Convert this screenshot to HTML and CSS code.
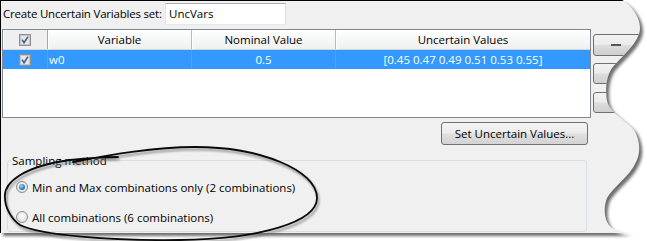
FILE: index.html
```html
<!DOCTYPE html>
<html>
<head>
<meta charset="utf-8">
<link rel="stylesheet" href="styles.css">
</head>
<body>
<div class="frame">
  <div class="panel">
    <div class="top">
      <div class="top-inner">
        <span class="lbl">Create Uncertain Variables set:</span>
        <div class="name">UncVars</div>
      </div>
    </div>
    <div class="mid">
      <div class="table">
        <div class="row head">
          <div class="cell c1"><svg class="cb" width="12" height="12" viewBox="0 0 12 12"><rect x="0.5" y="0.5" width="11" height="11" fill="#f3f3f3" stroke="#8e8f8f"/><rect x="1.5" y="1.5" width="9" height="9" fill="#e4e6e8" stroke="#c3c6ca"/><path d="M3,5.6 L5,8.6 L9,2.6" stroke="#4d5f8f" stroke-width="1.7" fill="none"/></svg></div>
          <div class="cell c2">Variable</div>
          <div class="cell c3">Nominal Value</div>
          <div class="cell c4">Uncertain Values</div>
        </div>
        <div class="row sel">
          <div class="cell c1"><svg class="cb" width="12" height="12" viewBox="0 0 12 12"><rect x="0.5" y="0.5" width="11" height="11" fill="#f3f3f3" stroke="#8e8f8f"/><rect x="1.5" y="1.5" width="9" height="9" fill="#e4e6e8" stroke="#c3c6ca"/><path d="M3,5.6 L5,8.6 L9,2.6" stroke="#4d5f8f" stroke-width="1.7" fill="none"/></svg></div>
          <div class="cell c2 left">w0</div>
          <div class="cell c3">0.5</div>
          <div class="cell c4">[0.45 0.47 0.49 0.51 0.53 0.55]</div>
        </div>
      </div>
      <div class="side">
        <div class="btn b1"><span class="dash"></span></div>
        <div class="btn b2"><span class="ico2"></span></div>
        <div class="btn b3"><span class="ico3"></span></div>
      </div>
    </div>
    <div class="actions">
      <div class="btn wide">Set Uncertain Values...</div>
    </div>
    <div class="group">
      <span class="legend">Sampling method</span>
      <div class="opts">
        <div class="opt"><span class="radio on"></span><span>Min and Max combinations only (2 combinations)</span></div>
        <div class="opt"><span class="radio"></span><span>All combinations (6 combinations)</span></div>
      </div>
    </div>
  </div>

  <svg class="overlay" width="647" height="241" viewBox="0 0 647 241">
    <defs>
      <clipPath id="outside">
        <path clip-rule="evenodd" d="M0,0H647V241H0Z M0,0 H622 C630,4 640,16 640,28 C640,42 622,56 612,68 C605,78 605,96 608,104 C612,114 628,122 634,130 C640,140 641,152 636,162 C630,176 612,188 607,198 C603,208 604,222 612,228 C618,232 626,233 632,233 H0 Z"/>
      </clipPath>
      <filter id="soft" x="-5%" y="-5%" width="110%" height="115%">
        <feGaussianBlur stdDeviation="1.6"/>
      </filter>
      <filter id="soft2" x="-5%" y="-20%" width="110%" height="140%">
        <feGaussianBlur stdDeviation="1.1"/>
      </filter>
    </defs>
    <path fill="#ffffff" fill-rule="evenodd" d="M0,0H647V241H0Z M0,0 H622 C630,4 640,16 640,28 C640,42 622,56 612,68 C605,78 605,96 608,104 C612,114 628,122 634,130 C640,140 641,152 636,162 C630,176 612,188 607,198 C603,208 604,222 612,228 C618,232 626,233 632,233 H0 Z"/>
    <g clip-path="url(#outside)">
      <path fill="#555555" opacity="0.85" filter="url(#soft)" transform="translate(3,3)" d="M0,0 H622 C630,4 640,16 640,28 C640,42 622,56 612,68 C605,78 605,96 608,104 C612,114 628,122 634,130 C640,140 641,152 636,162 C630,176 612,188 607,198 C603,208 604,222 612,228 C618,232 626,233 632,233 H0 Z"/>
    </g>
    <path class="ell-shadow" filter="url(#soft2)" transform="translate(1.5,2.5)" d="M73,162 C100,157 150,147 195,147 C260,147 317,170 317,198 C317,222 260,239 180,240 C110,241 40,235 20,225 C10,218 5,206 5,198 C3,182 25,166 70,160 C90,158 105,157 118,157"/>
    <path class="ell" d="M73,162 C100,157 150,147 195,147 C260,147 317,170 317,198 C317,222 260,239 180,240 C110,241 40,235 20,225 C10,218 5,206 5,198 C3,182 25,166 70,160 C90,158 105,157 118,157"/>
  </svg>
</div>
</body>
</html>
```

FILE: styles.css
```css
* { box-sizing: border-box; }
body {
  margin: 0;
  background: #ffffff;
  font-family: "Open Sans", "Noto Sans", "DejaVu Sans", sans-serif;
  font-size: 11.5px;
  color: #000;
}
.frame {
  position: relative;
  width: 647px;
  height: 241px;
  overflow: hidden;
}
.panel {
  width: 647px;
  height: 233px;
  background: #f0f0f0;
  border-left: 1px solid #000;
  border-top: 1px solid #000;
}
.top {
  height: 28px;
  padding: 2px 0 0 2px;
}
.top-inner {
  display: grid;
  grid-template-columns: 162px 121px;
  align-items: center;
  height: 22px;
}
.lbl {
  white-space: nowrap;
  line-height: 22px;
  letter-spacing: -0.2px;
}
.name {
  height: 22px;
  background: #fff;
  border: 1px solid #abadb3;
  border-color: #abadb3 #dbdfe6 #e3e9ef #e2e3ea;
  padding-left: 3px;
  line-height: 20px;
}
.mid {
  display: flex;
  margin-left: 1px;
  gap: 2px;
  height: 89px;
}
.table {
  width: 589px;
  height: 89px;
  border: 1px solid #828790;
  background: #fff;
  flex: none;
}
.row {
  display: grid;
  grid-template-columns: 45px 144px 144px 1fr;
}
.head {
  height: 20px;
  background: linear-gradient(#ffffff 0%, #f7f8f9 45%, #f0f0f0 100%);
  border-bottom: 1px solid #d5d5d5;
}
.cell {
  display: flex;
  align-items: center;
  justify-content: center;
  white-space: nowrap;
  border-right: 1px solid #b9b9b9;
  overflow: hidden;
}
.head .cell { box-shadow: inset 1px 0 #ffffff; }
.head .c4 { border-right: none; }
.head .c1 { border-right: 1px solid #a8a8a8; background: #efefef; }
.sel {
  height: 19px;
  background: #3399ff;
  color: #ffffff;
}
.sel .cell { border-right-color: #6a9ccf; }
.sel .c4 { border-right: none; }
.cell.left { justify-content: flex-start; padding-left: 1px; }
.cb { display: block; }
.side {
  display: flex;
  flex-direction: column;
  padding-top: 5px;
}
.btn {
  border: 1px solid #707070;
  border-radius: 3px;
  background: linear-gradient(#f2f2f2 0%, #ebebeb 48%, #dddddd 52%, #cfcfcf 100%);
  display: flex;
  align-items: center;
}
.side .btn { width: 50px; padding-left: 17px; }
.b1 { height: 22px; }
.b2 { height: 21px; margin-top: 7px; }
.b3 { height: 21px; margin-top: 8px; }
.dash { width: 10px; height: 2px; background: #555; }
.ico2 { width: 6px; height: 8px; border-left: 1px solid #9a9a9a; }
.ico3 { width: 7px; height: 10px; border-left: 1px solid #333; border-bottom: 1px solid #333; }
.actions {
  padding: 4px 0 0 440px;
}
.btn.wide {
  width: 147px;
  height: 23px;
  justify-content: center;
  background: linear-gradient(#f4f4f4 0%, #ececec 48%, #dfdfdf 52%, #d3d3d3 100%);
}
.group {
  margin: 15px 0 0 6px;
  width: 580px;
  height: 72px;
  border: 1px solid #d5dfe5;
  border-radius: 3px;
}
.legend {
  display: inline-block;
  margin: -8px 0 0 3px;
  padding: 0 1px;
  line-height: 15px;
  background: #f0f0f0;
  vertical-align: top;
}
.opts {
  display: flex;
  flex-direction: column;
  gap: 12px;
  margin-top: 2px;
  padding-left: 8px;
}
.opt {
  display: flex;
  align-items: center;
  gap: 4px;
  height: 18px;
  white-space: nowrap;
}
.radio {
  width: 12px;
  height: 12px;
  border-radius: 50%;
  border: 1px solid #8e8f8f;
  background: radial-gradient(circle at 50% 40%, #fbfbfb 0%, #e6e6e6 60%, #cfd1d3 100%);
  display: flex;
  align-items: center;
  justify-content: center;
  flex: none;
}
.radio.on::after {
  content: "";
  width: 6px;
  height: 6px;
  border-radius: 50%;
  background: radial-gradient(circle at 40% 35%, #a8dcff 0%, #3c8fd8 45%, #0f4c8f 100%);
}
.overlay {
  position: absolute;
  left: 0;
  top: 0;
  pointer-events: none;
}
.ell {
  fill: none;
  stroke: #0a0a0a;
  stroke-width: 1.8;
  stroke-linecap: round;
}
.ell-shadow {
  fill: none;
  stroke: #6a6a6a;
  stroke-width: 2;
  opacity: 0.7;
}
```
